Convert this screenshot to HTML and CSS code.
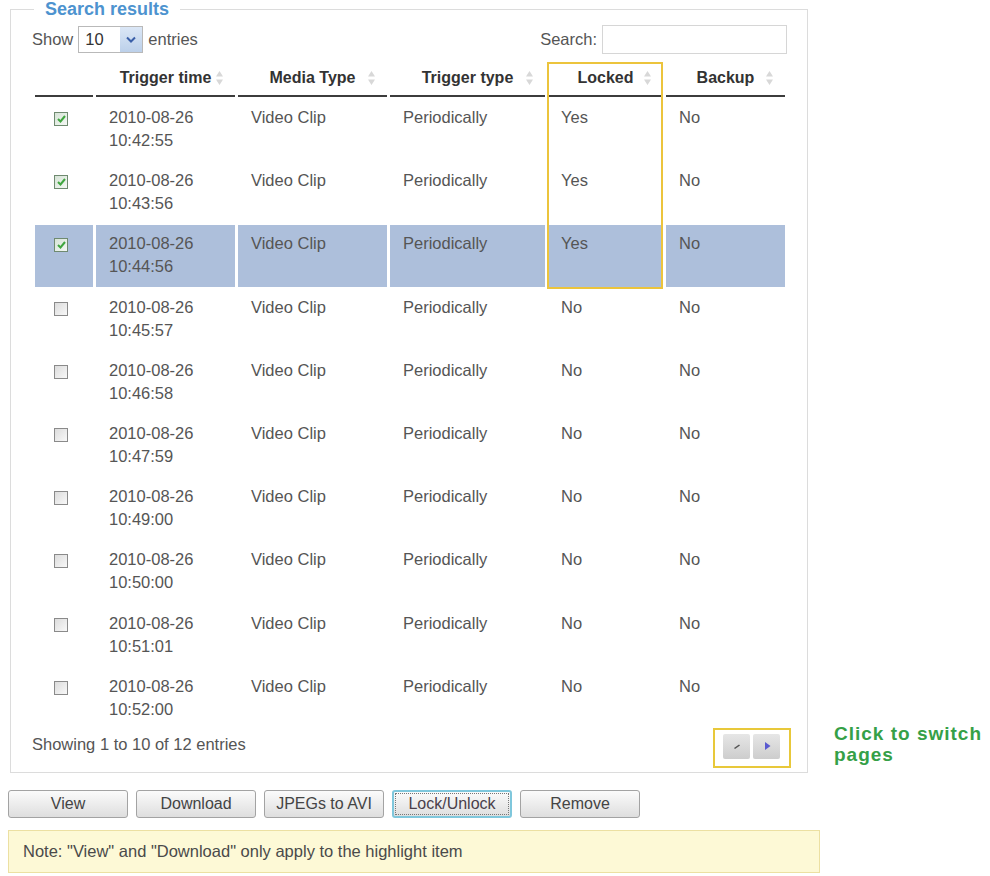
FILE: index.html
```html
<!DOCTYPE html>
<html lang="en">
<head>
    <meta charset="UTF-8">
    <meta name="viewport" content="width=device-width, initial-scale=1.0">
    <title>Search results</title>
    <link rel="stylesheet" href="styles.css">
</head>
<body>
<div class="page">
    <div class="main">
        <fieldset class="results">
            <legend>Search results</legend>

            <div class="controls">
                <div class="length">
                    <span>Show</span>
                    <div class="select">
                        <span class="select-value">10</span>
                        <span class="select-arrow">
                            <svg width="10" height="7" viewBox="0 0 10 7"><path d="M1 1.5 L5 5.5 L9 1.5" fill="none" stroke="#3a5fa8" stroke-width="2"/></svg>
                        </span>
                    </div>
                    <span>entries</span>
                </div>
                <label class="search">Search: <input type="text"></label>
            </div>

            <div class="table-wrap">
                <table class="grid">
                    <colgroup>
                        <col class="c-check">
                        <col class="c-time">
                        <col class="c-media">
                        <col class="c-type">
                        <col class="c-locked">
                        <col class="c-backup">
                    </colgroup>
                    <thead>
                    <tr>
                        <th></th>
                        <th>Trigger time<span class="sort"><svg width="7" height="14" viewBox="0 0 7 14"><path d="M3.5 0 L7 5.5 H0 Z M3.5 14 L0 8.5 H7 Z" fill="#d8d8d8"/></svg></span></th>
                        <th>Media Type<span class="sort"><svg width="7" height="14" viewBox="0 0 7 14"><path d="M3.5 0 L7 5.5 H0 Z M3.5 14 L0 8.5 H7 Z" fill="#d8d8d8"/></svg></span></th>
                        <th>Trigger type<span class="sort"><svg width="7" height="14" viewBox="0 0 7 14"><path d="M3.5 0 L7 5.5 H0 Z M3.5 14 L0 8.5 H7 Z" fill="#d8d8d8"/></svg></span></th>
                        <th>Locked<span class="sort"><svg width="7" height="14" viewBox="0 0 7 14"><path d="M3.5 0 L7 5.5 H0 Z M3.5 14 L0 8.5 H7 Z" fill="#d8d8d8"/></svg></span></th>
                        <th>Backup<span class="sort"><svg width="7" height="14" viewBox="0 0 7 14"><path d="M3.5 0 L7 5.5 H0 Z M3.5 14 L0 8.5 H7 Z" fill="#d8d8d8"/></svg></span></th>
                    </tr>
                    </thead>
                    <tbody>
                    <tr>
                        <td class="check"><span class="box checked"><svg width="9" height="8" viewBox="0 0 9 8"><path d="M1 4 L3.5 6.5 L8 1" fill="none" stroke="#3fa63f" stroke-width="2"/></svg></span></td>
                        <td>2010-08-26<br>10:42:55</td><td>Video Clip</td><td>Periodically</td><td>Yes</td><td>No</td>
                    </tr>
                    <tr>
                        <td class="check"><span class="box checked"><svg width="9" height="8" viewBox="0 0 9 8"><path d="M1 4 L3.5 6.5 L8 1" fill="none" stroke="#3fa63f" stroke-width="2"/></svg></span></td>
                        <td>2010-08-26<br>10:43:56</td><td>Video Clip</td><td>Periodically</td><td>Yes</td><td>No</td>
                    </tr>
                    <tr class="selected">
                        <td class="check"><span class="box checked"><svg width="9" height="8" viewBox="0 0 9 8"><path d="M1 4 L3.5 6.5 L8 1" fill="none" stroke="#3fa63f" stroke-width="2"/></svg></span></td>
                        <td>2010-08-26<br>10:44:56</td><td>Video Clip</td><td>Periodically</td><td>Yes</td><td>No</td>
                    </tr>
                    <tr>
                        <td class="check"><span class="box"></span></td>
                        <td>2010-08-26<br>10:45:57</td><td>Video Clip</td><td>Periodically</td><td>No</td><td>No</td>
                    </tr>
                    <tr>
                        <td class="check"><span class="box"></span></td>
                        <td>2010-08-26<br>10:46:58</td><td>Video Clip</td><td>Periodically</td><td>No</td><td>No</td>
                    </tr>
                    <tr>
                        <td class="check"><span class="box"></span></td>
                        <td>2010-08-26<br>10:47:59</td><td>Video Clip</td><td>Periodically</td><td>No</td><td>No</td>
                    </tr>
                    <tr>
                        <td class="check"><span class="box"></span></td>
                        <td>2010-08-26<br>10:49:00</td><td>Video Clip</td><td>Periodically</td><td>No</td><td>No</td>
                    </tr>
                    <tr>
                        <td class="check"><span class="box"></span></td>
                        <td>2010-08-26<br>10:50:00</td><td>Video Clip</td><td>Periodically</td><td>No</td><td>No</td>
                    </tr>
                    <tr>
                        <td class="check"><span class="box"></span></td>
                        <td>2010-08-26<br>10:51:01</td><td>Video Clip</td><td>Periodically</td><td>No</td><td>No</td>
                    </tr>
                    <tr>
                        <td class="check"><span class="box"></span></td>
                        <td>2010-08-26<br>10:52:00</td><td>Video Clip</td><td>Periodically</td><td>No</td><td>No</td>
                    </tr>
                    </tbody>
                </table>
                <div class="mark mark-locked"></div>
            </div>

            <div class="table-footer">
                <span class="info">Showing 1 to 10 of 12 entries</span>
                <div class="pager">
                    <span class="pager-btn"><svg width="10" height="10" viewBox="0 0 10 10"><path d="M2 7 L7 3.5 L8 4.5 L3 8 Z" fill="#555"/></svg></span>
                    <span class="pager-btn"><svg width="10" height="10" viewBox="0 0 10 10"><path d="M3 1 L8.5 5 L3 9 Z" fill="#5a5ad0"/></svg></span>
                </div>
            </div>
        </fieldset>

        <div class="actions">
            <button class="btn">View</button>
            <button class="btn">Download</button>
            <button class="btn">JPEGs to AVI</button>
            <button class="btn btn-focus"><span>Lock/Unlock</span></button>
            <button class="btn">Remove</button>
        </div>

        <div class="note">Note: "View" and "Download" only apply to the highlight item</div>
    </div>

    <div class="hint">Click to switch<br>pages</div>
</div>
</body>
</html>
```

FILE: styles.css
```css
body {
    margin: 0;
    font-family: "Liberation Sans", Arial, sans-serif;
    font-size: 16.5px;
    color: #555;
    background: #fff;
}
.page {
    position: relative;
    width: 990px;
    height: 876px;
}
.main {
    width: 820px;
}

/* fieldset */
.results {
    box-sizing: border-box;
    width: 798px;
    margin: 0 0 0 10px;
    padding: 6px 19px 4px 21px;
    border: 1px solid #dcdcdc;
}
.results legend {
    margin-left: 2px;
    padding: 0 11px;
    font-size: 18px;
    line-height: 18px;
    font-weight: bold;
    color: #4d93cf;
}

/* show / search */
.controls {
    display: flex;
    justify-content: space-between;
    align-items: center;
    height: 31px;
}
.length {
    display: flex;
    align-items: center;
    gap: 5px;
}
.select {
    display: flex;
    box-sizing: border-box;
    width: 65px;
    height: 27px;
    border: 1px solid #b9b9b9;
    background: #fff;
}
.select-value {
    flex: 1;
    padding-left: 6px;
    line-height: 25px;
    color: #333;
}
.select-arrow {
    display: flex;
    align-items: center;
    justify-content: center;
    width: 22px;
    background: linear-gradient(#dbe7f6, #bcd0ea);
}
.search {
    display: flex;
    align-items: center;
    gap: 5px;
    margin-right: 1px;
}
.search input {
    box-sizing: border-box;
    width: 185px;
    height: 29px;
    border: 1px solid #d6d6d6;
    font: inherit;
}

/* table */
.table-wrap {
    position: relative;
    margin-top: 4px;
}
.grid {
    width: 756px;
    table-layout: fixed;
    border-collapse: separate;
    border-spacing: 3px 2px;
}
.c-check { width: 58px; }
.c-time { width: 139px; }
.c-media { width: 149px; }
.c-type { width: 155px; }
.c-locked { width: 115px; }
.c-backup { width: 119px; }

.grid th {
    position: relative;
    padding: 8px 0;
    line-height: 18px;
    font-size: 16px;
    font-weight: bold;
    color: #333;
    text-align: center;
    border-bottom: 2px solid #3c3c3c;
}
.sort {
    position: absolute;
    right: 12px;
    top: 10px;
    line-height: 0;
}
.grid tbody tr {
    height: 61.2px;
}
.grid td {
    padding: 7px 0 8px 13px;
    line-height: 23px;
    vertical-align: top;
    white-space: nowrap;
}
.grid td.check {
    padding: 13px 0 0 19px;
}
.grid tr.selected td {
    background: #adbfdb;
}
.box {
    display: flex;
    align-items: center;
    justify-content: center;
    box-sizing: border-box;
    width: 14px;
    height: 14px;
    border: 1px solid #8a8a8a;
    background: linear-gradient(135deg, #dcdcdc, #f8f8f8);
}
.box.checked {
    border-color: #6f8a70;
    background: linear-gradient(135deg, #d6e3d6, #f4f8f4);
}

.mark {
    position: absolute;
    box-sizing: border-box;
    border: 2px solid #ecc43c;
}
.mark-locked {
    left: 515px;
    top: 3px;
    width: 116px;
    height: 227px;
}

/* footer of the table */
.table-footer {
    display: flex;
    justify-content: space-between;
    align-items: center;
    margin-top: -3px;
}
.info {
    margin-bottom: 6px;
}
.pager {
    display: flex;
    align-items: center;
    gap: 3px;
    box-sizing: border-box;
    width: 78px;
    height: 40px;
    margin-right: -3px;
    padding: 0 0 3px 8px;
    border: 2px solid #e8c83a;
}
.pager-btn {
    display: flex;
    align-items: center;
    justify-content: center;
    width: 27px;
    height: 25px;
    border-radius: 2px;
    background: linear-gradient(#e6e6e6, #cdcdcd);
}

/* buttons */
.actions {
    display: flex;
    gap: 8px;
    margin: 17px 0 0 8px;
}
.btn {
    box-sizing: border-box;
    width: 120px;
    height: 28px;
    padding: 0;
    border: 1px solid #a3a3a3;
    border-radius: 3px;
    background: linear-gradient(#fbfbfb, #dedede);
    font-family: "Liberation Sans", Arial, sans-serif;
    font-size: 16px;
    color: #444;
    cursor: pointer;
}
.btn-focus {
    border: 2px solid #7fc7dc;
    padding: 1px;
}
.btn-focus span {
    display: block;
    height: 100%;
    box-sizing: border-box;
    line-height: 20px;
    border: 1px dotted #777;
    color: #4a3f4a;
}

.note {
    box-sizing: border-box;
    width: 812px;
    height: 43px;
    margin: 12px 0 0 8px;
    padding-left: 14px;
    border: 1px solid #ece0a2;
    background: #fdf9d6;
    line-height: 41px;
    font-size: 16.5px;
    color: #4a4a4a;
}

/* callout */
.hint {
    position: absolute;
    left: 834px;
    top: 723px;
    font-size: 19px;
    line-height: 21px;
    font-weight: bold;
    letter-spacing: 1px;
    color: #35a047;
    white-space: nowrap;
}
```
